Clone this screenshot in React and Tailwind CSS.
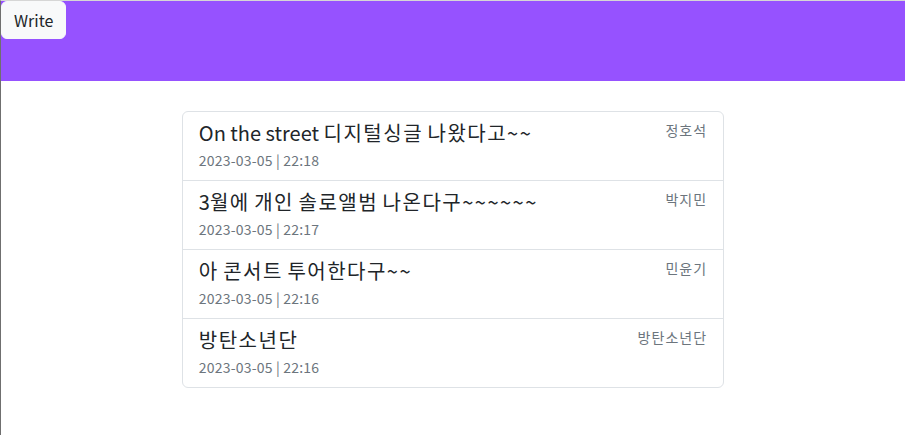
import React from 'react';

const posts = [
  { title: 'On the street 디지털싱글 나왔다고~~', author: '정호석', date: '2023-03-05 | 22:18' },
  { title: '3월에 개인 솔로앨범 나온다구~~~~~~', author: '박지민', date: '2023-03-05 | 22:17' },
  { title: '아 콘서트 투어한다구~~', author: '민윤기', date: '2023-03-05 | 22:16' },
  { title: '방탄소년단', author: '방탄소년단', date: '2023-03-05 | 22:16' },
];

// Hangul glyphs are narrower here than in the original font, so space them out a bit
function Spaced({ text }) {
  return text.split(/([가-힣~]+)/).map((part, i) =>
    /[가-힣~]/.test(part) ? (
      <span key={i} className="tracking-[0.075em]">{part}</span>
    ) : (
      <span key={i}>{part}</span>
    )
  );
}

export default function App() {
  return (
    <div
      className="min-h-[435px] bg-white border-l border-t border-l-[#6f6f6f] border-t-[#d6d6d6] text-[#212529]"
      style={{ fontFamily: '"Noto Sans CJK KR", "Noto Sans", sans-serif' }}
    >
      {/* Header */}
      <header className="h-20 bg-[#9652ff]">
        <button className="h-[38px] px-3 rounded-md bg-[#f8f9fa] border border-[#f8f9fa] text-base leading-6 text-[#212529]">
          Write
        </button>
      </header>

      {/* Post list */}
      <ul className="w-[60%] mx-auto mt-[30px] border border-[#dee2e6] rounded-md">
        {posts.map((post, i) => (
          <li
            key={i}
            className={`flex justify-between px-4 pt-2 pb-[9px] ${i > 0 ? 'border-t border-[#dee2e6]' : ''}`}
          >
            <div>
              <div className="text-xl leading-[26px] pb-[4px]">
                <Spaced text={post.title} />
              </div>
              <div className="text-sm leading-[21px] text-[#6c757d] tracking-[0.2px]">{post.date}</div>
            </div>
            <div className="text-sm leading-[21px] text-[#6c757d]">
              <Spaced text={post.author} />
            </div>
          </li>
        ))}
      </ul>
    </div>
  );
}
